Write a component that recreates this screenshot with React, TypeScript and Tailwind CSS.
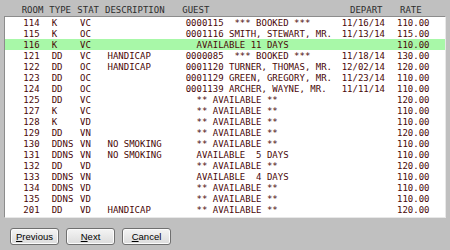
import React from 'react';

type Row = {
    room: string;
    type: string;
    stat: string;
    desc: string;
    guest: string;
    depart: string;
    rate: string;
    selected?: boolean;
};

const rows: Row[] = [
    { room: '114', type: 'K', stat: 'VC', desc: '', guest: '0000115  *** BOOKED ***', depart: '11/16/14', rate: '110.00' },
    { room: '115', type: 'K', stat: 'OC', desc: '', guest: '0001116 SMITH, STEWART, MR.', depart: '11/13/14', rate: '115.00' },
    { room: '116', type: 'K', stat: 'VC', desc: '', guest: '  AVAILABLE 11 DAYS', depart: '', rate: '110.00', selected: true },
    { room: '121', type: 'DD', stat: 'VC', desc: 'HANDICAP', guest: '0000085  *** BOOKED ***', depart: '11/18/14', rate: '130.00' },
    { room: '122', type: 'DD', stat: 'OC', desc: 'HANDICAP', guest: '0001120 TURNER, THOMAS, MR.', depart: '12/02/14', rate: '120.00' },
    { room: '123', type: 'DD', stat: 'OC', desc: '', guest: '0001129 GREEN, GREGORY, MR.', depart: '11/23/14', rate: '110.00' },
    { room: '124', type: 'DD', stat: 'OC', desc: '', guest: '0001139 ARCHER, WAYNE, MR.', depart: '11/11/14', rate: '110.00' },
    { room: '125', type: 'DD', stat: 'VC', desc: '', guest: '  ** AVAILABLE **', depart: '', rate: '120.00' },
    { room: '127', type: 'K', stat: 'VC', desc: '', guest: '  ** AVAILABLE **', depart: '', rate: '110.00' },
    { room: '128', type: 'K', stat: 'VD', desc: '', guest: '  ** AVAILABLE **', depart: '', rate: '110.00' },
    { room: '129', type: 'DD', stat: 'VN', desc: '', guest: '  ** AVAILABLE **', depart: '', rate: '120.00' },
    { room: '130', type: 'DDNS', stat: 'VN', desc: 'NO SMOKING', guest: '  ** AVAILABLE **', depart: '', rate: '110.00' },
    { room: '131', type: 'DDNS', stat: 'VN', desc: 'NO SMOKING', guest: '  AVAILABLE  5 DAYS', depart: '', rate: '110.00' },
    { room: '132', type: 'DD', stat: 'VD', desc: '', guest: '  ** AVAILABLE **', depart: '', rate: '120.00' },
    { room: '133', type: 'DDNS', stat: 'VN', desc: '', guest: '  AVAILABLE  4 DAYS', depart: '', rate: '110.00' },
    { room: '134', type: 'DDNS', stat: 'VD', desc: '', guest: '  ** AVAILABLE **', depart: '', rate: '110.00' },
    { room: '135', type: 'DDNS', stat: 'VD', desc: '', guest: '  ** AVAILABLE **', depart: '', rate: '110.00' },
    { room: '201', type: 'DD', stat: 'VD', desc: 'HANDICAP', guest: '  ** AVAILABLE **', depart: '', rate: '120.00' },
];

const Button = ({ label, rest }: { label: string; rest: string }) => (
    <button className="w-[49px] h-[17px] rounded-[3px] border border-[#707070] bg-gradient-to-b from-[#f4f4f4] to-[#dcdcdc] text-[9.5px] leading-[15px] text-black font-['Liberation_Sans',sans-serif] shadow-[inset_0_0_0_1px_#fcfcfc]">
        <span className="underline">{label}</span>{rest}
    </button>
);

const App = () => {
    return (
        <div className="w-[450px] h-[250px] bg-[#c0c0c0] pt-[5px] font-['DejaVu_Sans_Mono',monospace] text-[9px] overflow-hidden">
            {/* column headings */}
            <div className="flex h-[11px] leading-[11px] text-[#2e2e2e] whitespace-pre">
                <span className="pl-[21.7px] w-[49.3px]">ROOM</span>
                <span className="w-[28px]">TYPE</span>
                <span className="w-[27.7px]">STAT</span>
                <span className="w-[77.3px]">DESCRIPTION</span>
                <span className="w-[167.7px]">GUEST</span>
                <span className="w-[50px]">DEPART</span>
                <span>RATE</span>
            </div>

            <div className="mx-[4px] w-[442px] h-[202px] bg-white border border-t-[#8c8c8c] border-l-[#8c8c8c] border-r-[#e8e8e8] border-b-[#e8e8e8]">
                {rows.map((r) => (
                    <div
                        key={r.room}
                        className={`flex h-[11px] leading-[11px] pt-[0.5px] whitespace-pre text-[#4a0808] ${r.selected ? 'bg-[#a8f8a8]' : ''}`}
                    >
                        <span className="pl-[18.3px] w-[46.7px]">{r.room}</span>
                        <span className="w-[28.3px]">{r.type}</span>
                        <span className="w-[27.5px]">{r.stat}</span>
                        <span className="w-[78.2px]">{r.desc}</span>
                        <span className="w-[156px]">{r.guest}</span>
                        <span className="w-[55.3px]">{r.depart}</span>
                        <span>{r.rate}</span>
                    </div>
                ))}
            </div>

            <div className="flex gap-[7px] pl-[10px] pt-[10px]">
                <Button label="P" rest="revious" />
                <Button label="N" rest="ext" />
                <Button label="C" rest="ancel" />
            </div>
        </div>
    );
};

export default App;
